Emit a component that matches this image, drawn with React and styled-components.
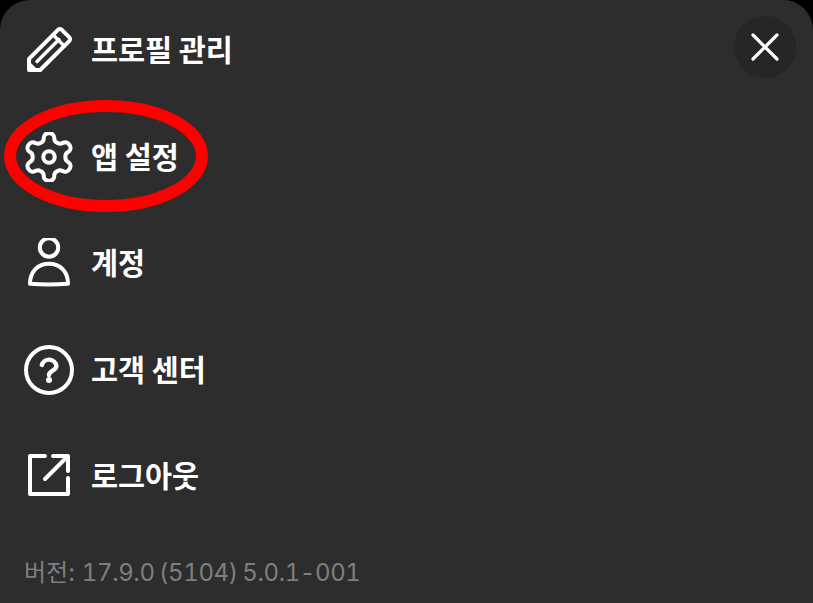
import React from "react";
import styled, { createGlobalStyle } from "styled-components";

const GlobalStyle = createGlobalStyle`
  html, body {
    margin: 0;
    background: #000;
  }
`
const Sheet = styled.div`
  position: relative;
  box-sizing: border-box;
  width: 813px;
  height: 603px;
  overflow: hidden;
  padding-top: 18px;
  background: #2d2d2d;
  border-radius: 30px 30px 0 0;
  font-family: "Noto Sans CJK KR", "Noto Sans", sans-serif;
`
const Menu = styled.ul`
  display: flex;
  flex-direction: column;
  gap: 42.5px;
  margin: 0;
  padding: 0 0 0 24px;
  list-style: none;
`
const Row = styled.li`
  display: flex;
  align-items: center;
  gap: 17px;
  height: 64px;
`
const Icon = styled.svg`
  flex: none;
  width: 50px;
  height: 50px;
  fill: none;
  stroke: #fff;
  stroke-width: ${(props) => props.$stroke || 4};
  stroke-linecap: round;
  stroke-linejoin: round;
`
const Label = styled.span`
  padding-bottom: 4px;
  color: #fff;
  font-size: 29.4px;
  font-weight: 700;
  line-height: 40px;
`
const Version = styled.div`
  margin: 50px 0 0 24px;
  color: #7f7f7f;
  font-family: "Inter", "Noto Sans CJK KR", sans-serif;
  font-size: 24px;
  line-height: 30px;
`
const BuildNumber = styled.span`
  font-variant-numeric: tabular-nums;
  letter-spacing: -0.4px;
  word-spacing: -1.5px;
`
const CloseButton = styled.button`
  position: absolute;
  top: 16px;
  right: 17px;
  display: flex;
  align-items: center;
  justify-content: center;
  width: 62px;
  height: 62px;
  padding: 0;
  border: 0;
  border-radius: 50%;
  background: #262626;
`
const CloseIcon = styled.svg`
  width: 30px;
  height: 30px;
  stroke: #fff;
  stroke-width: 3.2;
  stroke-linecap: round;
`
const Highlight = styled.svg`
  position: absolute;
  top: 100px;
  left: 4px;
  width: 204px;
  height: 112px;
  fill: none;
  stroke: #fe0000;
  stroke-width: 12;
`

const menuItems = [
  {
    label: "프로필 관리",
    icon: (
      <Icon viewBox="0 0 50 50">
        <path d="M5 45V33.8L34.2 4.6a2.4 2.4 0 0 1 3.4 0l7.8 7.8a2.4 2.4 0 0 1 0 3.4L16.2 45Z" />
        <path d="M29 9.8 40.2 21M13 36.5 35 14.5" strokeWidth="3.4" />
        <path d="M5.5 39.5 10.5 44.5H5.5Z" fill="#fff" />
      </Icon>
    ),
  },
  {
    label: "앱 설정",
    icon: (
      <Icon viewBox="1.5 1.5 21 21" $stroke={1.7}>
        <path d="M12.22 2h-.44a2 2 0 0 0-2 2v.18a2 2 0 0 1-1 1.73l-.43.25a2 2 0 0 1-2 0l-.15-.08a2 2 0 0 0-2.73.73l-.22.38a2 2 0 0 0 .73 2.73l.15.1a2 2 0 0 1 1 1.72v.51a2 2 0 0 1-1 1.74l-.15.09a2 2 0 0 0-.73 2.73l.22.38a2 2 0 0 0 2.73.73l.15-.08a2 2 0 0 1 2 0l.43.25a2 2 0 0 1 1 1.73V20a2 2 0 0 0 2 2h.44a2 2 0 0 0 2-2v-.18a2 2 0 0 1 1-1.73l.43-.25a2 2 0 0 1 2 0l.15.08a2 2 0 0 0 2.73-.73l.22-.39a2 2 0 0 0-.73-2.73l-.15-.08a2 2 0 0 1-1-1.74v-.5a2 2 0 0 1 1-1.74l.15-.09a2 2 0 0 0 .73-2.73l-.22-.38a2 2 0 0 0-2.73-.73l-.15.08a2 2 0 0 1-2 0l-.43-.25a2 2 0 0 1-1-1.73V4a2 2 0 0 0-2-2z" />
        <circle cx="12" cy="12" r="2.4" />
      </Icon>
    ),
  },
  {
    label: "계정",
    icon: (
      <Icon viewBox="0 0 50 50">
        <circle cx="25" cy="9.5" r="9.2" />
        <path d="M6 45.8C6 33.5 14 25.8 25 25.8s19 7.7 19 20Q25 47.2 6 45.8Z" />
      </Icon>
    ),
  },
  {
    label: "고객 센터",
    icon: (
      <Icon viewBox="0 0 50 50">
        <circle cx="25" cy="25" r="23" />
        <path d="M17.8 20a7.5 7.5 0 0 1 14.6 1c0 4.6-7.4 4.6-7.4 9" strokeWidth="4.4" />
        <circle cx="25" cy="35" r="3" fill="#fff" stroke="none" />
      </Icon>
    ),
  },
  {
    label: "로그아웃",
    icon: (
      <Icon viewBox="0 0 50 50">
        <path d="M21 5H6v38h38V27" />
        <path d="M21 28 44 5M29 5h15v15" />
      </Icon>
    ),
  },
];

const App = () => {
  return (
    <Sheet>
      <GlobalStyle />
      <Menu>
        {menuItems.map((item) => (
          <Row key={item.label}>
            {item.icon}
            <Label>{item.label}</Label>
          </Row>
        ))}
      </Menu>
      <Version>
        버전: <BuildNumber>17.9.0 (5104) 5.0.1-001</BuildNumber>
      </Version>
      <CloseButton aria-label="닫기">
        <CloseIcon viewBox="0 0 30 30">
          <path d="M3 3 27 27M27 3 3 27" />
        </CloseIcon>
      </CloseButton>
      <Highlight viewBox="0 0 204 112">
        <ellipse cx="102" cy="56" rx="96" ry="50" />
      </Highlight>
    </Sheet>
  );
};

export default App;
